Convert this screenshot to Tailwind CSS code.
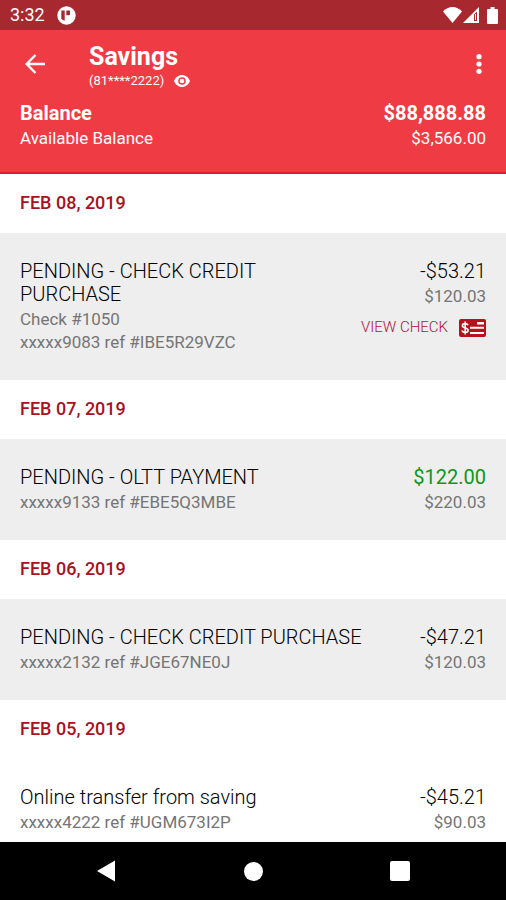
<!DOCTYPE html>
<html lang="en">
<head>
<meta charset="utf-8">
<meta name="viewport" content="width=device-width, initial-scale=1">
<title>Savings</title>
<script src="https://cdn.jsdelivr.net/npm/@tailwindcss/browser@4"></script>
</head>
<body class="flex h-screen flex-col overflow-hidden bg-white font-['Roboto','Noto_Sans',sans-serif]">
  <div class="flex h-[30px] shrink-0 items-center bg-[#a82830] pr-2 pl-[10px] text-white">
    <span class="text-[18px] leading-6">3:32</span>
    <svg class="ml-3 size-[19px]" viewBox="0 0 19 19" aria-hidden="true">
      <circle cx="9.5" cy="9.5" r="9.2" fill="#fff"/>
      <path d="M4.300 4.500h3.400v10.300a6 6 0 0 1-3.400-2zM9.300 4.500H13v3.600q0 1.200-1.200 1.200H9.300z" fill="#a82830"/>
    </svg>
    <svg class="ml-auto h-4 w-[19px]" viewBox="0 0 19 16" aria-hidden="true"><path d="M9.500 16 0 4.500C2.500 1.500 6 0 9.500 0s7 1.500 9.500 4.500z" fill="#fff"/></svg>
    <svg class="ml-[1px] size-4" viewBox="0 0 16 16" aria-hidden="true"><path fill-rule="evenodd" d="M16 0v16H0zM11 7.500v6.500h3V4.500z" fill="#fff"/><path d="M12 7h1v6h-1z" fill="#fff"/></svg>
    <svg class="ml-2 h-[17px] w-[11px]" viewBox="0 0 11 17" aria-hidden="true"><path d="M3.500 0h4v2H10a1 1 0 0 1 1 1v13a1 1 0 0 1-1 1H1a1 1 0 0 1-1-1V3a1 1 0 0 1 1-1h2.500z" fill="#fff"/></svg>
  </div>

  <header class="shrink-0 border-b-2 border-[#dc2030] bg-[#ef3b44] px-5 pt-[13px] pb-[21px] text-white">
    <div class="flex items-start">
      <button type="button" aria-label="Back" class="mt-[6px] flex size-[30px] items-center justify-center">
        <svg class="size-5" viewBox="0 0 20 20" fill="none" stroke="#fff" stroke-width="2.400" aria-hidden="true"><path d="M20 10H2M10.500 1 1.600 10l8.900 9"/></svg>
      </button>
      <div class="ml-[39px]">
        <h1 class="text-[25px] leading-7 font-bold">Savings</h1>
        <div class="flex items-center text-[13px] leading-5">
          <span>(81****2222)</span>
          <button type="button" aria-label="Show account number" class="ml-[10px]">
            <svg class="h-3 w-4" viewBox="0 0 16 12" aria-hidden="true"><path fill-rule="evenodd" d="M8 0c3.600 0 6.700 2.400 8 6-1.300 3.600-4.400 6-8 6S1.300 9.600 0 6c1.300-3.600 4.400-6 8-6zm0 2.200a3.800 3.800 0 1 0 0 7.600 3.800 3.800 0 0 0 0-7.600z" fill="#fff"/><circle cx="8" cy="6" r="2.300" fill="#fff"/></svg>
          </button>
        </div>
      </div>
      <button type="button" aria-label="More options" class="mt-[6px] ml-auto flex h-[30px] w-[14px] items-center justify-center">
        <svg class="h-5 w-[6px]" viewBox="0 0 6 20" fill="#fff" aria-hidden="true"><circle cx="3" cy="2.700" r="2.600"/><circle cx="3" cy="10" r="2.600"/><circle cx="3" cy="17.300" r="2.600"/></svg>
      </button>
    </div>
    <div class="mt-[10px] flex justify-between text-[20px] leading-6 font-bold"><span>Balance</span><span>$88,888.88</span></div>
    <div class="flex justify-between text-[17px] leading-[26px]"><span>Available Balance</span><span>$3,566.00</span></div>
  </header>

  <main class="min-h-0 flex-1 overflow-hidden">
    <section>
      <h2 class="px-5 pt-[17px] pb-[18px] text-[18px] leading-6 font-medium text-[#a8111d]">FEB 08, 2019</h2>
      <article class="flex justify-between gap-5 bg-[#eeeeee] px-5 pt-[27px] pb-[26px]">
        <div class="max-w-64 space-y-[2px]">
          <h3 class="text-[20px] leading-[23px] font-light text-black">PENDING - CHECK CREDIT PURCHASE</h3>
          <p class="text-[17px] leading-[23px] text-[#757575]">Check #1050<br>xxxxx9083 ref #IBE5R29VZC</p>
        </div>
        <div class="space-y-[2px] text-right">
          <p class="text-[20px] leading-[23px] font-light text-black">-$53.21</p>
          <p class="text-[17px] leading-[23px] text-[#757575]">$120.03</p>
          <button type="button" class="mt-2 flex items-center gap-[11px] text-[15px] leading-[23px] font-light text-[#b01238]">VIEW CHECK
            <svg class="h-[18px] w-[27px]" viewBox="0 0 27 18" aria-hidden="true"><rect width="27" height="18" rx="2" fill="#b5121b"/><path d="M18 3h7v2.500h-7zM11 7.800h14v2H11zM11 13h14v2H11z" fill="#fff"/><path d="M9 6.200C8.500 5 7.400 4.600 6.200 4.600c-1.600 0-2.800.8-2.800 2.100 0 3 5.700 1.500 5.700 4.500 0 1.300-1.200 2.200-2.900 2.200-1.600 0-2.700-.6-3.200-2M6.200 2.500v13" fill="none" stroke="#fff" stroke-width="1.600"/></svg>
          </button>
        </div>
      </article>
    </section>
    <section>
      <h2 class="px-5 pt-[17px] pb-[18px] text-[18px] leading-6 font-medium text-[#a8111d]">FEB 07, 2019</h2>
      <article class="flex justify-between gap-5 bg-[#eeeeee] px-5 pt-[27px] pb-[26px]">
        <div class="space-y-[2px]">
          <h3 class="text-[20px] leading-[23px] font-light text-black">PENDING - OLTT PAYMENT</h3>
          <p class="text-[17px] leading-[23px] text-[#757575]">xxxxx9133 ref #EBE5Q3MBE</p>
        </div>
        <div class="space-y-[2px] text-right">
          <p class="text-[20px] leading-[23px] text-[#109618]">$122.00</p>
          <p class="text-[17px] leading-[23px] text-[#757575]">$220.03</p>
        </div>
      </article>
    </section>
    <section>
      <h2 class="px-5 pt-[17px] pb-[18px] text-[18px] leading-6 font-medium text-[#a8111d]">FEB 06, 2019</h2>
      <article class="flex justify-between gap-5 bg-[#eeeeee] px-5 pt-[27px] pb-[26px]">
        <div class="space-y-[2px]">
          <h3 class="text-[20px] leading-[23px] font-light text-black">PENDING - CHECK CREDIT PURCHASE</h3>
          <p class="text-[17px] leading-[23px] text-[#757575]">xxxxx2132 ref #JGE67NE0J</p>
        </div>
        <div class="space-y-[2px] text-right">
          <p class="text-[20px] leading-[23px] font-light text-black">-$47.21</p>
          <p class="text-[17px] leading-[23px] text-[#757575]">$120.03</p>
        </div>
      </article>
    </section>
    <section>
      <h2 class="px-5 pt-[17px] pb-[18px] text-[18px] leading-6 font-medium text-[#a8111d]">FEB 05, 2019</h2>
      <article class="flex justify-between gap-5 bg-white px-5 pt-[27px] pb-[26px]">
        <div class="space-y-[2px]">
          <h3 class="text-[20px] leading-[23px] font-light text-black">Online transfer from saving</h3>
          <p class="text-[17px] leading-[23px] text-[#757575]">xxxxx4222 ref #UGM673I2P</p>
        </div>
        <div class="space-y-[2px] text-right">
          <p class="text-[20px] leading-[23px] font-light text-black">-$45.21</p>
          <p class="text-[17px] leading-[23px] text-[#757575]">$90.03</p>
        </div>
      </article>
    </section>
  </main>

  <nav aria-label="System" class="flex h-[58px] shrink-0 items-center justify-between bg-black px-[88px]">
    <button type="button" aria-label="Back" class="flex size-9 items-center justify-center"><svg class="h-[22px] w-[18px]" viewBox="0 0 18 22" aria-hidden="true"><path d="M18 .5v21L0 11z" fill="#fff"/></svg></button>
    <button type="button" aria-label="Home" class="flex size-9 items-center justify-center"><span class="size-[19px] rounded-full bg-white"></span></button>
    <button type="button" aria-label="Recent apps" class="flex size-9 items-center justify-center"><span class="size-5 rounded-[2px] bg-white"></span></button>
  </nav>
</body>
</html>
